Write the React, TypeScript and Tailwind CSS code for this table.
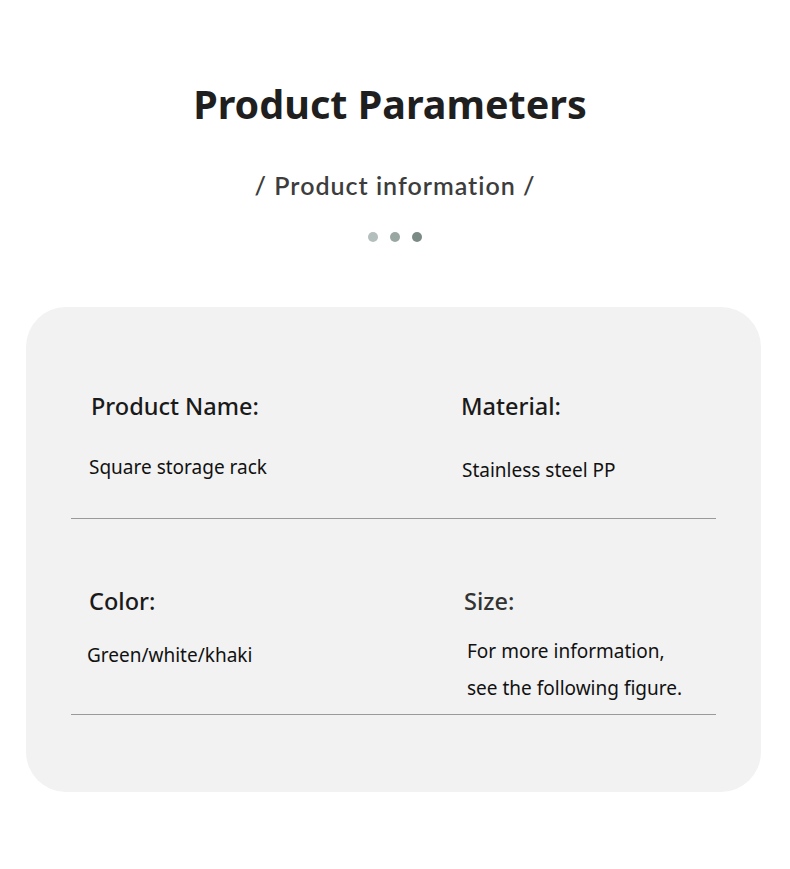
import React from "react";

export default function App() {
  return (
    <div className="w-[790px] h-[869px] bg-white overflow-hidden" style={{ fontFamily: '"Noto Sans", "Open Sans", sans-serif' }}>
      <div className="pt-[80px] flex flex-col items-center">
        <h1 className="pr-[10px] text-[39.5px] leading-[48px] font-bold text-[#1f1f1f] tracking-[0px]">Product Parameters</h1>
        <div className="mt-[42px] text-[25px] leading-[30px] font-semibold text-[#3d3d3d] tracking-[1px]" style={{ fontFamily: '"Lato", "Noto Sans", sans-serif' }}>/ Product information /</div>
        <div className="mt-[32px] flex gap-[12px]">
          <span className="w-[10px] h-[10px] rounded-full bg-[#b3bfbc]" />
          <span className="w-[10px] h-[10px] rounded-full bg-[#99a7a3]" />
          <span className="w-[10px] h-[10px] rounded-full bg-[#7a8b86]" />
        </div>
      </div>
      <div className="mt-[65px] ml-[26px] w-[735px] h-[485px] rounded-[40px] bg-[#f2f2f2] px-[45px]">
        <div className="pt-[84px] grid grid-cols-[390px_1fr] border-b border-[#9a9a9a] pb-[35px]">
          <div className="pl-[20px]">
            <div className="text-[23.5px] leading-[30px] font-medium text-[#1a1a1a]">Product Name:</div>
            <div className="mt-[33px] text-[19px] leading-[26px] text-[#111] -ml-[2px]">Square storage rack</div>
          </div>
          <div>
            <div className="text-[23.5px] leading-[30px] font-medium text-[#1a1a1a]">Material:</div>
            <div className="mt-[36px] text-[19px] leading-[26px] text-[#111] ml-[1px]">Stainless steel PP</div>
          </div>
        </div>
        <div className="pt-[67px] grid grid-cols-[390px_1fr] border-b border-[#9a9a9a] pb-[7px]">
          <div className="pl-[18px]">
            <div className="text-[23.5px] leading-[30px] font-medium text-[#1a1a1a]">Color:</div>
            <div className="mt-[26px] text-[19px] leading-[26px] text-[#111] -ml-[2px]">Green/white/khaki</div>
          </div>
          <div className="pl-[3px]">
            <div className="text-[23.5px] leading-[30px] font-medium text-[#333]">Size:</div>
            <div className="mt-[17px] text-[19px] leading-[37px] text-[#111] ml-[3px]">
              <div>For more information,</div>
              <div>see the following figure.</div>
            </div>
          </div>
        </div>
      </div>
    </div>
  );
}
